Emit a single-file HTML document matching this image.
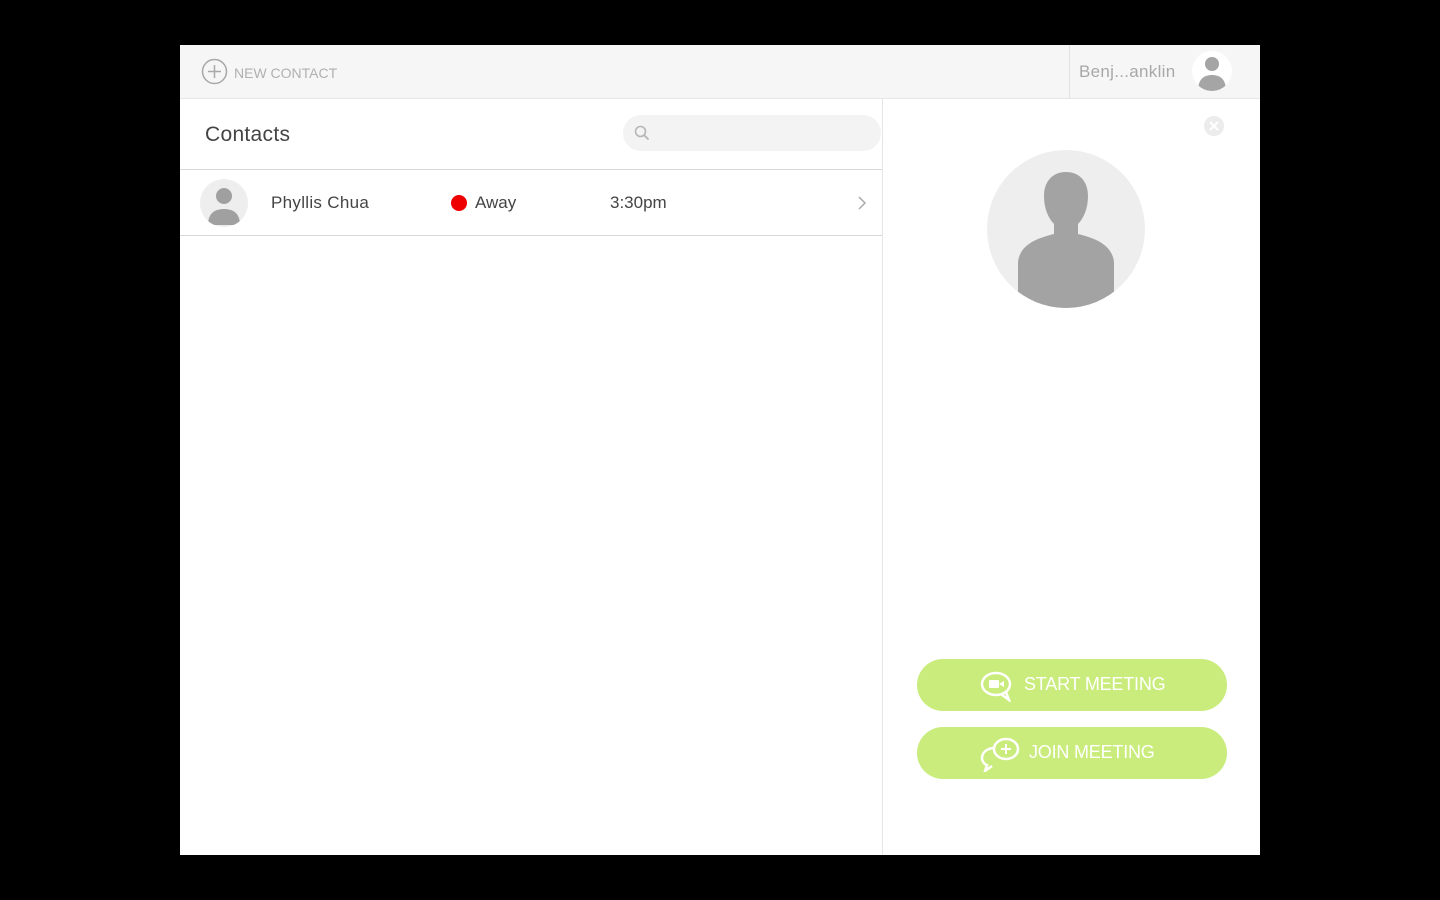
<!DOCTYPE html>
<html><head><style>
body{margin:0;width:1440px;height:900px;background:#000;font-family:"Liberation Sans",sans-serif;position:relative;overflow:hidden}
.app{position:absolute;left:180px;top:45px;width:1080px;height:810px;background:#fff}
.top{position:absolute;left:0;top:0;width:1080px;height:53px;background:#f6f6f6;border-bottom:1px solid #e6e6e6}
.abs{position:absolute}
.btn{position:absolute;left:737px;width:310px;height:52px;border-radius:26px;background:#c9ec7c;color:#fff;font-size:18px;letter-spacing:-.2px}
</style></head><body>
<div class="app">
<div class="top">
 <svg class="abs" style="left:21px;top:13px" width="27" height="27"><circle cx="13.5" cy="13.5" r="12" fill="none" stroke="#a8a8a8" stroke-width="1.5"/><path d="M13.5 7v13M7 13.5h13" stroke="#a8a8a8" stroke-width="1.5"/></svg>
 <div class="abs" style="left:54px;top:20px;font-size:14px;color:#b0b0b0">NEW CONTACT</div>
 <div class="abs" style="left:889px;top:0;width:1px;height:53px;background:#e2e2e2"></div>
 <div class="abs" style="left:899px;top:17px;font-size:17px;color:#a8a8a8;letter-spacing:.3px">Benj...anklin</div>
 <div class="abs" style="left:1012px;top:6px;width:40px;height:40px;border-radius:50%;background:#fff;overflow:hidden">
  <svg width="40" height="40"><circle cx="20" cy="13" r="7" fill="#a5a5a5"/><path d="M6 40c0-12 6-16 14-16s14 4 14 16z" fill="#a5a5a5"/></svg></div>
</div>
<div class="abs" style="left:25px;top:78px;font-size:21px;color:#444;letter-spacing:.3px">Contacts</div>
<div class="abs" style="left:443px;top:70px;width:258px;height:36px;border-radius:18px;background:#f3f3f3"></div>
<svg class="abs" style="left:454px;top:80px" width="16" height="16"><circle cx="6.5" cy="6.5" r="5" fill="none" stroke="#b5b5b5" stroke-width="1.6"/><path d="M10 10l4.5 4.5" stroke="#b5b5b5" stroke-width="1.8"/></svg>
<div class="abs" style="left:0;top:124px;width:702px;height:1px;background:#d8d8d8"></div>
<div class="abs" style="left:20px;top:134px;width:48px;height:48px;border-radius:50%;background:#eee;overflow:hidden">
 <svg width="48" height="48"><circle cx="24" cy="17" r="8" fill="#a0a0a0"/><path d="M8 46c0-12 7-16 16-16s16 4 16 16z" fill="#a0a0a0"/></svg></div>
<div class="abs" style="left:91px;top:148px;font-size:17px;color:#444;letter-spacing:.3px">Phyllis Chua</div>
<div class="abs" style="left:271px;top:150px;width:16px;height:16px;border-radius:50%;background:#e00"></div>
<div class="abs" style="left:295px;top:148px;font-size:17px;color:#444">Away</div>
<div class="abs" style="left:430px;top:148px;font-size:17px;color:#444">3:30pm</div>
<svg class="abs" style="left:677px;top:150px" width="10" height="16"><path d="M2 2l6 6-6 6" fill="none" stroke="#aaa" stroke-width="1.5"/></svg>
<div class="abs" style="left:0;top:190px;width:702px;height:1px;background:#d8d8d8"></div>
<div class="abs" style="left:702px;top:53px;width:1px;height:757px;background:#e6e6e6"></div>
<svg class="abs" style="left:1023px;top:70px" width="22" height="22"><circle cx="11" cy="11" r="10" fill="#ececec"/><path d="M7 7l8 8M15 7l-8 8" stroke="#fff" stroke-width="2"/></svg>
<div class="abs" style="left:807px;top:105px;width:158px;height:158px;border-radius:50%;background:#eee;overflow:hidden">
 <svg width="158" height="158"><path d="M79 22c-13 0-22 9-22 24 0 12 4 22 10 28v10c-16 4-34 10-36 28v46h96v-46c-2-18-20-24-36-28v-10c6-6 10-16 10-28 0-15-9-24-22-24z" fill="#a3a3a3"/></svg></div>
<div class="btn" style="top:614px">
 <svg class="abs" style="left:62px;top:11px" width="36" height="32"><ellipse cx="17" cy="14" rx="14" ry="11" fill="none" stroke="#fff" stroke-width="2.5"/><path d="M22 24l8 6-3-8" fill="none" stroke="#fff" stroke-width="2.5"/><rect x="10" y="10" width="10" height="8" rx="1" fill="#fff"/><path d="M20 14l5-3v6z" fill="#fff"/></svg>
 <div class="abs" style="left:107px;top:15px">START MEETING</div></div>
<div class="btn" style="top:682px">
 <svg class="abs" style="left:62px;top:9px" width="42" height="36"><ellipse cx="27" cy="13" rx="12" ry="10" fill="#c9ec7c" stroke="#fff" stroke-width="2.5"/><path d="M27 8v10M22 13h10" stroke="#fff" stroke-width="2"/><path d="M14 12c-7 1-11 5-11 10 0 3 2 6 5 7l-2 6 7-5" fill="none" stroke="#fff" stroke-width="2.5"/></svg>
 <div class="abs" style="left:112px;top:15px">JOIN MEETING</div></div>
</div>
</body></html>
